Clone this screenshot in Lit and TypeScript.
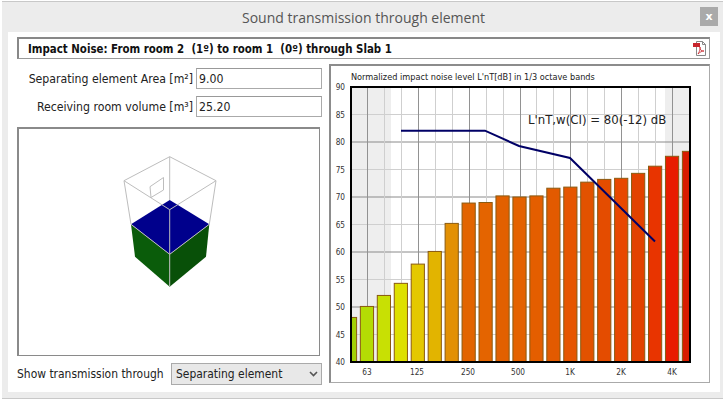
import { LitElement, html, css, svg } from "lit";
import { customElement } from "lit/decorators.js";

const VALUES = [48.1,50.1,52.1,54.3,57.8,60.1,65.2,68.9,69.0,70.2,70.0,70.2,71.6,71.8,72.7,73.2,73.4,74.3,75.6,77.4,78.3];
const COLORS = ["#a2d006","#b4dc04","#c8e004","#dee000","#e4c800","#e2b400","#e29004","#e26400","#e46400","#e26000","#e46200","#e45e00","#e25a00","#e65600","#e25200","#e44c00","#e84800","#e24200","#e83400","#e81c00","#d81c00"];
const X0 = 350, STEP = 16.95, YB = 362, PX = 5.5;
const PL = 351, PR = 690, PT = 87;
const y = (v: number) => YB - (v - 40) * PX;
const x = (i: number) => X0 + i * STEP;
const OX = 329, OY = 64;

@customElement("app-root")
export class AppRoot extends LitElement {
  static styles = css`
    :host { display: block; width: 726px; height: 401px; background: #fff; overflow: hidden; font-family: "DejaVu Sans", sans-serif; }
    .dialog { height: 398px; margin: 1px 3px 0 2px; background: #ececec; border-top: 1px solid #c8c8c8; border-bottom: 1px solid #c8c8c8; box-sizing: border-box; display: flex; flex-direction: column; padding: 0 3px 6px 6px; }
    .titlebar { height: 30px; flex: none; position: relative; display: flex; align-items: center; justify-content: center; font: 14px "Open Sans", sans-serif; color: #555; padding-right: 1px; }
    .close { position: absolute; right: 2px; top: 5px; width: 18px; height: 19px; background: #aaa; color: #fff; font: bold 11px "DejaVu Sans", sans-serif; display: flex; align-items: center; justify-content: center; }
    .body { flex: 1; background: #fff; padding: 5px 2px 0 9px; display: flex; flex-direction: column; gap: 5px; min-height: 0; }
    .head { height: 22px; box-sizing: border-box; border: 1px solid #999; border-top: 2px solid #888; border-left: 2px solid #888; width: 693px; display: flex; align-items: center; justify-content: space-between; padding: 0 3px 0 9px; font: bold 11.4px "DejaVu Sans Condensed", "DejaVu Sans", sans-serif; color: #111; }
    .head span { white-space: pre; }
    .main { display: grid; grid-template-columns: 305px 381px; column-gap: 7px; }
    .left { display: flex; flex-direction: column; padding-top: 4px; }
    .row { display: flex; justify-content: flex-end; align-items: center; gap: 3px; height: 21px; margin-bottom: 7px; font: 12.2px "DejaVu Sans Condensed", "DejaVu Sans", sans-serif; color: #222; }
    .input { width: 126px; height: 21px; box-sizing: border-box; border: 1px solid #aaa; border-top-color: #999; padding: 0 2px; display: flex; align-items: center; background: #fff; }
    .view { width: 303px; height: 229px; box-sizing: border-box; border: 2px solid #8a8a8a; border-right-width: 1px; border-bottom-width: 1px; margin-top: 3px; }
    .view svg { display: block; }
    .show { display: flex; align-items: center; justify-content: space-between; height: 22px; margin-top: 7px; font: 11.95px "DejaVu Sans Condensed", "DejaVu Sans", sans-serif; color: #222; }
    .select { width: 151px; height: 22px; box-sizing: border-box; border: 1px solid #aaa; background: #e8e8e8; display: flex; align-items: center; justify-content: space-between; padding: 0 3px 0 4px; }
    .chart { width: 381px; height: 319px; box-sizing: border-box; border: 2px solid #8c8c8c; border-right: 1px solid #aaa; border-bottom: 1px solid #aaa; position: relative; }
    .chart svg { display: block; position: absolute; left: -2px; top: -2px; }
    .t { font: 8.2px "DejaVu Sans Condensed", "DejaVu Sans", sans-serif; fill: #333; }
    .cap { font: 9.1px "DejaVu Sans Condensed", "DejaVu Sans", sans-serif; fill: #222; }
    .note { font: 13.05px "DejaVu Sans Condensed", "DejaVu Sans", sans-serif; fill: #222; }
  `;

  chart() {
    const gx = (n: number) => n - OX, gy = (n: number) => n - OY;
    const verts = VALUES.map((_, i) => i).slice(1);
    return html`<svg width="381" height="319" viewBox="0 0 381 319">
      <rect x=${gx(PL)} y=${gy(PT)} width="40" height="275" fill="#eeeeee"/>
      <rect x=${gx(665)} y=${gy(PT)} width="25" height="275" fill="#eeeeee"/>
      ${[45,50,55,60,65,70,75,80,85].map(v => svg`<line x1=${gx(PL)} x2=${gx(PR)} y1=${gy(y(v))} y2=${gy(y(v))} stroke=${v % 10 === 0 ? "#8a8a8a" : "#cfcfcf"}/>`)}
      ${verts.map(i => svg`<line x1=${gx(Math.round(x(i)) + .5)} x2=${gx(Math.round(x(i)) + .5)} y1=${gy(PT)} y2=${gy(YB)} stroke=${i % 3 === 1 ? "#929292" : "#cfcfcf"}/>`)}
      ${VALUES.map((v, i) => {
        const l = Math.max(x(i) - 6.6, PL), r = Math.min(x(i) + 6.6, PR);
        return svg`<rect x=${gx(l)} y=${gy(y(v))} width=${r - l} height=${YB - y(v)} fill=${COLORS[i]} stroke="#8a5a10" stroke-width="1"/>`;
      })}
      <polyline points="${gx(401)},${gy(130.7)} ${gx(485)},${gy(130.7)} ${gx(519)},${gy(146)} ${gx(570)},${gy(158)} ${gx(655)},${gy(241.5)}" fill="none" stroke="#000066" stroke-width="2"/>
      <rect x=${gx(PL)} y=${gy(PT)} width=${PR - PL} height="275" fill="none" stroke="#000" stroke-width="2"/>
      ${[40,45,50,55,60,65,70,75,80,85,90].map(v => svg`<text class="t" x=${gx(345)} y=${gy(y(v) + 3)} text-anchor="end">${v}</text>`)}
      ${[["63",367],["125",417],["250",468],["500",518],["1K",570],["2K",621],["4K",672]].map(([s, p]) => svg`<text class="t" x=${gx(p as number)} y=${gy(375)} text-anchor="middle">${s}</text>`)}
      <text class="cap" x=${gx(351)} y=${gy(80)}>Normalized impact noise level L'nT[dB] in 1/3 octave bands</text>
      <text class="note" x=${gx(528)} y=${gy(124)}>L'nT,w(CI) = 80(-12) dB</text>
    </svg>`;
  }

  view() {
    const o = (p: string) => p.split(" ").map(c => { const [a, b] = c.split(","); return `${+a - 17},${+b - 127}`; }).join(" ");
    return html`<svg width="301" height="228" viewBox="2 2 301 228">
      <polygon points=${o("131,224.3 169.7,254.3 169.7,286.7 135,256.7")} fill="#0a5c0a"/>
      <polygon points=${o("209.3,224.3 169.7,254.3 169.7,286.7 206,256.7")} fill="#085008"/>
      <polygon points=${o("169.7,200 209.3,224.3 169.7,254.3 131,224.3")} fill="#00008c"/>
      <g fill="none" stroke="#bdbdbd" stroke-width="1">
        <polygon points=${o("169.7,156.7 216,180.7 169.7,209.7 124,180.7")}/>
        <polyline points=${o("169.7,156.7 169.7,200")}/>
        <polyline points=${o("124,180.7 131,224.3")}/>
        <polyline points=${o("216,180.7 209.3,224.3")}/>
        <polyline points=${o("169.7,209.7 169.7,286")}/>
        <polyline points=${o("131,224.3 169.7,254.3 209.3,224.3")}/>
        <polygon points=${o("150,186.7 163.5,177.5 163.5,190 151,197.5")}/>
      </g>
    </svg>`;
  }

  render() {
    return html`<div class="dialog">
      <div class="titlebar">Sound transmission through element<div class="close">x</div></div>
      <div class="body">
        <div class="head"><span>Impact Noise: From room 2  (1º) to room 1  (0º) through Slab 1</span>
          <svg width="13" height="15" viewBox="0 0 13 15"><path d="M3.5 .5h6l3 3v11h-9z" fill="#fff" stroke="#888"/><path d="M9.5 .5v3h3" fill="none" stroke="#888"/><rect x="0" y="2" width="7" height="4" fill="#c8242c"/><path d="M5 13c2-3 2-5 2-7 0 3 1 4 4 4-2 0-4 1-6 3z" fill="none" stroke="#c8242c" stroke-width=".8"/></svg>
        </div>
        <div class="main">
          <div class="left">
            <div class="row"><span>Separating element Area [m²]</span><div class="input">9.00</div></div>
            <div class="row"><span>Receiving room volume [m³]</span><div class="input">25.20</div></div>
            <div class="view">${this.view()}</div>
            <div class="show"><span>Show transmission through</span><div class="select"><span>Separating element</span><svg width="9" height="6" viewBox="0 0 9 6"><path d="M1 1l3.5 3.5L8 1" fill="none" stroke="#555" stroke-width="1.6"/></svg></div></div>
          </div>
          <div class="chart">${this.chart()}</div>
        </div>
      </div>
    </div>`;
  }
}
